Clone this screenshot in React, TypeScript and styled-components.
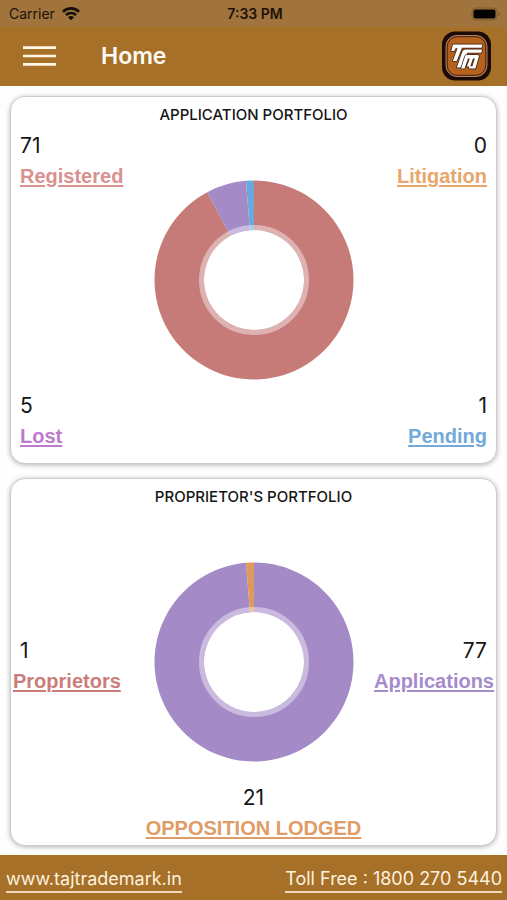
import React from "react";
import styled, { createGlobalStyle } from "styled-components";

const GlobalStyle = createGlobalStyle`
  *, *::before, *::after { box-sizing: border-box; }
  body {
    margin: 0;
    background: #fefefe;
    color: #151515;
    font-family: Inter, "Liberation Sans", sans-serif;
  }
`;

const Screen = styled.div`
  display: flex;
  flex-direction: column;
  min-height: 100vh;
`;

const StatusBar = styled.div`
  display: grid;
  grid-template-columns: 1fr auto 1fr;
  align-items: center;
  height: 27px;
  padding: 0 6px 0 9px;
  background: #a0743c;
  color: #1b120a;
  font-size: 14px;
  line-height: 27px;
`;

const Carrier = styled.span`
  display: flex;
  align-items: center;
  gap: 7px;
`;

const Clock = styled.time`
  font-weight: 600;
`;

const Battery = styled.span`
  display: flex;
  justify-content: flex-end;
`;

const Header = styled.header`
  display: flex;
  align-items: center;
  height: 59px;
  padding: 0 16px 2px 23px;
  background: #a67029;
`;

const MenuButton = styled.button`
  display: flex;
  padding: 0;
  border: 0;
  background: none;
  cursor: pointer;
`;

const PageTitle = styled.h1`
  flex: 1;
  margin: 0 0 0 45px;
  color: #fffaf2;
  font-size: 23px;
  font-weight: 600;
  line-height: 30px;
`;

const Main = styled.main`
  display: flex;
  flex: 1;
  flex-direction: column;
  gap: 14px;
  padding: 10px 10px 9px;
`;

const Card = styled.section<{ $bottom: number }>`
  display: grid;
  flex: 1 0 340px;
  grid-template-columns: 1fr auto 1fr;
  grid-template-rows: auto auto 1fr auto;
  padding-bottom: ${(p) => p.$bottom}px;
  border: 1px solid #cdcdcd;
  border-radius: 15px;
  background: #fff;
  box-shadow: 0 1px 5px rgba(0, 0, 0, 0.3);
`;

const CardTitle = styled.h2`
  grid-area: 1 / 1 / 2 / 4;
  margin: 0;
  padding: 3px 0 1px;
  font-size: 15px;
  font-weight: 500;
  line-height: 30px;
  text-align: center;
`;

const DonutFrame = styled.div<{ $bottom: number }>`
  grid-area: 1 / 2 / 5 / 3;
  align-self: center;
  display: flex;
  margin-bottom: ${(p) => -p.$bottom}px;
`;

type Place = "topLeft" | "topRight" | "bottomLeft" | "bottomRight" | "left" | "right" | "bottom";

const areas: Record<Place, string> = {
  topLeft: "2 / 1 / 3 / 2",
  topRight: "2 / 3 / 3 / 4",
  bottomLeft: "4 / 1 / 5 / 2",
  bottomRight: "4 / 3 / 5 / 4",
  left: "1 / 1 / 5 / 2",
  right: "1 / 3 / 5 / 4",
  bottom: "4 / 1 / 5 / 4",
};

const sideOf = (place: Place) =>
  /left/i.test(place) ? "flex-start" : /right/i.test(place) ? "flex-end" : "center";

const StatBox = styled.div<{ $place: Place }>`
  grid-area: ${(p) => areas[p.$place]};
  display: flex;
  flex-direction: column;
  justify-content: center;
  align-items: ${(p) => sideOf(p.$place)};
  padding-top: ${(p) => (p.$place === "left" || p.$place === "right" ? 9 : 0)}px;
`;

const StatValue = styled.span`
  padding: 0 9px;
  font-size: 21px;
  line-height: 30px;
`;

const StatLink = styled.a<{ $color: string; $inset: number }>`
  margin: 0 ${(p) => p.$inset}px;
  color: ${(p) => p.$color};
  font-family: "Liberation Sans", Arial, sans-serif;
  font-size: 20px;
  font-weight: 700;
  line-height: 30px;
  text-decoration: underline;
  text-decoration-thickness: 2px;
  text-underline-offset: 2px;
`;

const Footer = styled.footer`
  display: flex;
  align-items: flex-start;
  justify-content: space-between;
  height: 45px;
  padding: 11px 5px 0 6px;
  background: #a67029;
`;

const FooterLink = styled.a`
  border-bottom: 2px solid #eedbbd;
  color: #fdf2df;
  font-size: 18px;
  line-height: 25px;
  text-decoration: none;
  white-space: nowrap;
`;

type Slice = { value: number; color: string };

function point(radius: number, turn: number) {
  const a = turn * 2 * Math.PI;
  return `${100 + radius * Math.sin(a)} ${100 - radius * Math.cos(a)}`;
}

function Donut({ slices, label }: { slices: Slice[]; label: string }) {
  const total = slices.reduce((sum, s) => sum + s.value, 0);
  let start = 0;
  return (
    <svg width="200" height="200" viewBox="0 0 200 200" role="img" aria-label={label}>
      {slices.map((s) => {
        const end = start + s.value / total;
        const large = end - start > 0.5 ? 1 : 0;
        const d = `M${point(99.5, start)}A99.5 99.5 0 ${large} 1 ${point(99.5, end)}L${point(50, end)}A50 50 0 ${large} 0 ${point(50, start)}Z`;
        start = end;
        return <path key={s.color} d={d} fill={s.color} />;
      })}
      <circle cx="100" cy="100" r="52.5" fill="none" stroke="#fff" strokeOpacity="0.42" strokeWidth="5" />
    </svg>
  );
}

function Stat(props: { place: Place; value: number; label: string; color: string; inset?: number }) {
  return (
    <StatBox $place={props.place}>
      <StatValue>{props.value}</StatValue>
      <StatLink href="#" $color={props.color} $inset={props.inset ?? 9}>
        {props.label}
      </StatLink>
    </StatBox>
  );
}

function WifiIcon() {
  return (
    <svg width="18" height="14" viewBox="0 0 18 14" fill="none" stroke="#140d06" strokeWidth="2.6" aria-hidden="true">
      <path d="M1 4.7C5.6 .3 12.4 .3 17 4.7" />
      <path d="M4 8C6.8 5.3 11.2 5.3 14 8" />
      <path d="M9 13.2 6 10.3C7.8 8.6 10.2 8.6 12 10.3Z" fill="#140d06" stroke="none" />
    </svg>
  );
}

function BatteryIcon() {
  return (
    <svg width="30" height="14" viewBox="0 0 30 14" aria-hidden="true">
      <rect x="1" y="1" width="25" height="12" rx="3.6" fill="none" stroke="#7c5b2e" strokeWidth="1" />
      <rect x="2.5" y="2.5" width="22" height="9" rx="2" fill="#050302" />
      <path d="M27.5 5v4c1.8-.7 1.8-3.3 0-4Z" fill="#7c5b2e" />
    </svg>
  );
}

function MenuIcon() {
  return (
    <svg width="33" height="22" viewBox="0 0 33 22" stroke="#fff6e6" strokeWidth="2.6" aria-hidden="true">
      <path d="M0 2.6H33M0 11H33M0 19.4H33" />
    </svg>
  );
}

function Logo() {
  return (
    <svg width="49" height="50" viewBox="0 0 49 50" role="img" aria-label="TFM">
      <rect x="0" y="0.5" width="49" height="49" rx="13" fill="#1d0906" />
      <rect x="4" y="4.5" width="41" height="41" rx="11" fill="#b5621f" stroke="#a98775" strokeWidth="1" />
      <rect x="5.2" y="5.7" width="38.6" height="38.6" rx="10" fill="none" stroke="#4a1c0c" strokeWidth="1" />
      <g fill="#fff" stroke="#3a1a10" strokeWidth="1.4" strokeLinejoin="round" paintOrder="stroke">
        <path d="M11 13.5H40.5L39.6 16.8H20L14.8 30H10.8L15.6 17.2H13.6L12.2 20H9.2Z" />
        <path d="M23 18.5H40.2L39.2 21.8H25.5L18.6 36.5H14.8L20.2 21Q21 18.5 23 18.5Z" />
        <path d="M24.6 24H35.6Q37.4 24 36.8 26L33.4 37.6H26.8L27.4 35.2H30.4L32.8 27.4H31L28.2 35.5H24.8L27.8 27.4H26L22.6 37.6H19L23 25.4Q23.5 24 24.6 24Z" />
      </g>
    </svg>
  );
}

export default function App() {
  return (
    <Screen>
      <GlobalStyle />
      <StatusBar>
        <Carrier>
          Carrier
          <WifiIcon />
        </Carrier>
        <Clock>7:33 PM</Clock>
        <Battery>
          <BatteryIcon />
        </Battery>
      </StatusBar>
      <Header>
        <MenuButton type="button" aria-label="Menu">
          <MenuIcon />
        </MenuButton>
        <PageTitle>Home</PageTitle>
        <Logo />
      </Header>
      <Main>
        <Card $bottom={12}>
          <CardTitle>APPLICATION PORTFOLIO</CardTitle>
          <DonutFrame $bottom={12}>
            <Donut
              label="Application portfolio"
              slices={[
                { value: 71, color: "#c67b79" },
                { value: 5, color: "#a48ac6" },
                { value: 1, color: "#6ba9dc" },
              ]}
            />
          </DonutFrame>
          <Stat place="topLeft" value={71} label="Registered" color="#d9918f" />
          <Stat place="topRight" value={0} label="Litigation" color="#e9a66b" />
          <Stat place="bottomLeft" value={5} label="Lost" color="#bd7bcd" />
          <Stat place="bottomRight" value={1} label="Pending" color="#72a9d8" />
        </Card>
        <Card $bottom={2}>
          <CardTitle>PROPRIETOR'S PORTFOLIO</CardTitle>
          <DonutFrame $bottom={2}>
            <Donut
              label="Proprietor's portfolio"
              slices={[
                { value: 77, color: "#a48ac6" },
                { value: 1, color: "#dd9a5c" },
              ]}
            />
          </DonutFrame>
          <Stat place="left" value={1} label="Proprietors" color="#cb7d7b" inset={2} />
          <Stat place="right" value={77} label="Applications" color="#a58cca" inset={2} />
          <Stat place="bottom" value={21} label="OPPOSITION LODGED" color="#e09c66" />
        </Card>
      </Main>
      <Footer>
        <FooterLink href="#">www.tajtrademark.in</FooterLink>
        <FooterLink href="tel:18002705440">Toll Free : 1800 270 5440</FooterLink>
      </Footer>
    </Screen>
  );
}
